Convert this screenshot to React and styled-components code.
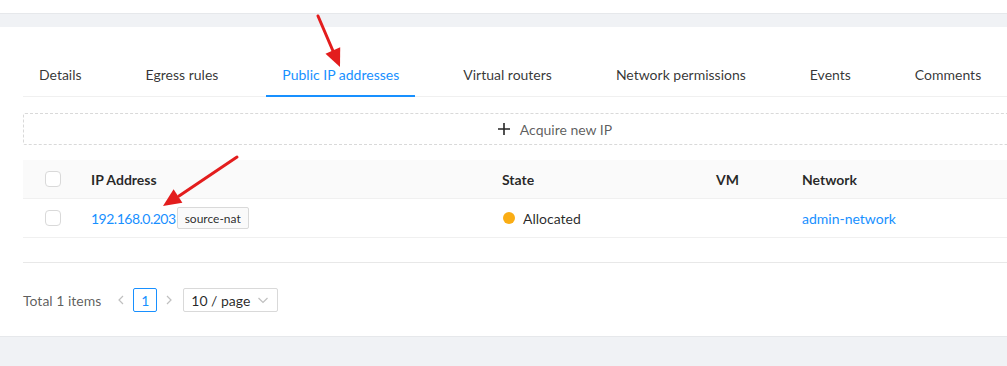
import React from "react";
import styled, { createGlobalStyle } from "styled-components";

const GlobalStyle = createGlobalStyle`
  html, body {
    margin: 0;
    padding: 0;
    overflow: hidden;
    background: #ffffff;
  }
  body {
    font-family: Lato, "Liberation Sans", sans-serif;
    font-size: 14px;
    color: rgba(0, 0, 0, 0.85);
  }
`;

const Page = styled.div`
  position: relative;
  width: 1110px;
  height: 366px;
  display: flex;
  flex-direction: column;
`;

const TopStrip = styled.div`
  height: 13px;
  background: #ffffff;
`;

const Band = styled.div`
  height: 14px;
  flex: ${(p) => (p.$grow ? 1 : "none")};
  background: #f0f2f5;
  border-top: 1px solid #e6e8eb;
  box-sizing: border-box;
`;

const Card = styled.main`
  background: #ffffff;
  border-radius: 4px;
  padding: 22px 23px 24px;
`;

const TabBar = styled.nav`
  display: flex;
  border-bottom: 1px solid #f0f0f0;
`;

const Tab = styled.div`
  padding: 15px 16px 9px;
  margin-right: 32px;
  line-height: 22px;
  color: ${(p) => (p.$active ? "#1890ff" : "rgba(0, 0, 0, 0.8)")};
  border-bottom: 2px solid ${(p) => (p.$active ? "#1890ff" : "transparent")};
  margin-bottom: -1px;
  white-space: nowrap;
`;

const AddButton = styled.button`
  display: flex;
  align-items: center;
  justify-content: center;
  gap: 10px;
  width: 100%;
  height: 32px;
  margin-top: 16px;
  border: 1px dashed #d9d9d9;
  border-radius: 2px;
  background: #ffffff;
  font-family: inherit;
  font-size: 14px;
  color: rgba(0, 0, 0, 0.65);
`;

const Table = styled.div`
  margin-top: 15px;
`;

const Row = styled.div`
  display: grid;
  grid-template-columns: 68px 411px 214px 86px 1fr;
  align-items: center;
  height: 39px;
  box-sizing: border-box;
  border-bottom: 1px solid #f0f0f0;
  background: ${(p) => (p.$head ? "#fafafa" : "#ffffff")};
  font-weight: ${(p) => (p.$head ? 700 : 400)};
  color: rgba(0, 0, 0, 0.85);
`;

const Cell = styled.div`
  display: flex;
  align-items: center;
  white-space: nowrap;
`;

const CheckCell = styled.div`
  padding-left: 22px;
  display: flex;
  align-items: center;
`;

const Checkbox = styled.span`
  width: 16px;
  height: 16px;
  box-sizing: border-box;
  border: 1px solid #d9d9d9;
  border-radius: 4px;
  background: #ffffff;
`;

const Link = styled.a`
  color: #1890ff;
  text-decoration: none;
  letter-spacing: ${(p) => p.$tight ? "-0.5px" : "0"};
`;

const Tag = styled.span`
  display: inline-flex;
  align-items: center;
  height: 22px;
  box-sizing: border-box;
  padding: 0 7px;
  margin-left: 1px;
  font-size: 12px;
  color: rgba(0, 0, 0, 0.85);
  background: #fafafa;
  border: 1px solid #d9d9d9;
  border-radius: 2px;
`;

const Dot = styled.span`
  width: 12px;
  height: 12px;
  border-radius: 50%;
  background: #faad14;
  margin: 0 8px 0 1px;
`;

const Divider = styled.div`
  height: 1px;
  margin-top: 24px;
  background: #e8e8e8;
`;

const Pagination = styled.div`
  display: flex;
  align-items: center;
  margin-top: 25px;
  height: 24px;
  color: rgba(0, 0, 0, 0.65);
`;

const Total = styled.span`
  margin-right: 8px;
`;

const Arrow = styled.span`
  width: 24px;
  height: 24px;
  display: flex;
  align-items: center;
  justify-content: center;
  color: rgba(0, 0, 0, 0.25);
`;

const PageItem = styled.span`
  width: 24px;
  height: 24px;
  box-sizing: border-box;
  display: flex;
  align-items: center;
  justify-content: center;
  border: 1px solid #1890ff;
  border-radius: 2px;
  color: #1890ff;
`;

const SizeSelect = styled.span`
  display: flex;
  align-items: center;
  gap: 8px;
  height: 24px;
  box-sizing: border-box;
  padding: 0 9px 0 7px;
  margin-left: 2px;
  border: 1px solid #d9d9d9;
  border-radius: 2px;
  color: rgba(0, 0, 0, 0.85);
`;

const Caret = styled.span`
  display: flex;
  color: rgba(0, 0, 0, 0.25);
`;

const Overlay = styled.svg`
  position: absolute;
  left: 0;
  top: 0;
  pointer-events: none;
`;

const Chevron = ({ d }) => (
  <svg width="10" height="10" viewBox="0 0 10 10">
    <path d={d} fill="none" stroke="currentColor" strokeWidth="1.2" />
  </svg>
);

const tabs = [
  "Details",
  "Egress rules",
  "Public IP addresses",
  "Virtual routers",
  "Network permissions",
  "Events",
  "Comments",
];

export default function App() {
  return (
    <>
      <GlobalStyle />
      <Page>
        <TopStrip />
        <Band />
        <Card>
          <TabBar>
            {tabs.map((t) => (
              <Tab key={t} $active={t === "Public IP addresses"}>
                {t}
              </Tab>
            ))}
          </TabBar>
          <AddButton>
            <svg width="12" height="12" viewBox="0 0 12 12">
              <path d="M6 0v12M0 6h12" stroke="#262626" strokeWidth="1.6" />
            </svg>
            Acquire new IP
          </AddButton>
          <Table>
            <Row $head>
              <CheckCell>
                <Checkbox />
              </CheckCell>
              <Cell>IP Address</Cell>
              <Cell>State</Cell>
              <Cell>VM</Cell>
              <Cell>Network</Cell>
            </Row>
            <Row>
              <CheckCell>
                <Checkbox />
              </CheckCell>
              <Cell>
                <Link $tight>192.168.0.203</Link>
                <Tag>source-nat</Tag>
              </Cell>
              <Cell>
                <Dot />
                Allocated
              </Cell>
              <Cell />
              <Cell>
                <Link>admin-network</Link>
              </Cell>
            </Row>
          </Table>
          <Divider />
          <Pagination>
            <Total>Total 1 items</Total>
            <Arrow>
              <Chevron d="M7 1L3 5l4 4" />
            </Arrow>
            <PageItem>1</PageItem>
            <Arrow>
              <Chevron d="M3 1l4 4-4 4" />
            </Arrow>
            <SizeSelect>
              10 / page
              <Caret>
                <Chevron d="M0.5 3l4.5 4.5L9.5 3" />
              </Caret>
            </SizeSelect>
          </Pagination>
        </Card>
        <Band $grow />
        <Overlay width="1007" height="366">
          <g stroke="#e31d1d" strokeWidth="3" strokeLinecap="round" fill="#e31d1d">
            <line x1="318" y1="16" x2="333" y2="51" />
            <polygon points="340,67 325.5,53.7 340.2,47.3" stroke="none" />
            <line x1="237" y1="157" x2="179" y2="196" />
            <polygon points="163,206 173.6,189.3 182.4,202.7" stroke="none" />
          </g>
        </Overlay>
      </Page>
    </>
  );
}
